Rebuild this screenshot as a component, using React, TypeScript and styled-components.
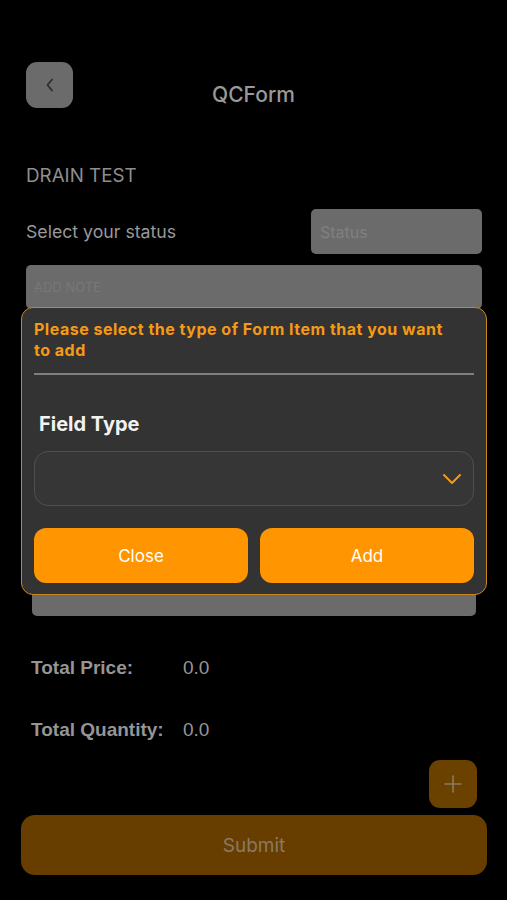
import React from 'react';
import styled, { createGlobalStyle } from 'styled-components';

const GlobalStyle = createGlobalStyle`
  html, body {
    margin: 0;
    padding: 0;
    background: #000;
  }
  body {
    font-family: Inter, 'Noto Sans', sans-serif;
  }
`;

const Screen = styled.div`
  position: relative;
  width: 507px;
  min-height: 900px;
  background: #000;
  overflow: hidden;
`;

const Header = styled.div`
  display: grid;
  grid-template-columns: 47px 1fr 47px;
  padding: 62px 26px 0;
`;

const BackButton = styled.div`
  width: 47px;
  height: 46px;
  border-radius: 11px;
  background: #6b6b6b;
  display: flex;
  align-items: center;
  justify-content: center;
`;

const Title = styled.div`
  padding-top: 22px;
  text-align: center;
  font-size: 21px;
  line-height: 22px;
  font-weight: 500;
  color: #999;
`;

const Content = styled.div`
  padding: 0 25px 0 26px;
`;

const SectionTitle = styled.div`
  margin-top: 58px;
  font-size: 18.8px;
  line-height: 20px;
  color: #8e8e8e;
`;

const StatusRow = styled.div`
  margin-top: 23px;
  display: flex;
  align-items: center;
  justify-content: space-between;
`;

const Label = styled.div`
  font-size: 17.7px;
  color: #999;
`;

const Field = styled.div<{ $width?: number; $height: number; $small?: boolean }>`
  width: ${(p) => (p.$width ? `${p.$width}px` : '100%')};
  height: ${(p) => p.$height}px;
  box-sizing: border-box;
  border-radius: 5px;
  background: #6b6b6b;
  display: flex;
  align-items: center;
  padding-left: ${(p) => (p.$small ? 8 : 9)}px;
  font-size: ${(p) => (p.$small ? 13 : 16)}px;
  color: ${(p) => (p.$small ? '#787878' : '#808080')};
`;

const NoteField = styled(Field)`
  margin-top: 11px;
`;

const ItemCard = styled.div`
  margin: 11px 6px 0 6px;
  height: 296px;
  border-radius: 5px;
  background: #6b6b6b;
`;

const Totals = styled.div`
  padding-left: 5px;
  margin-top: 42px;
  display: flex;
  flex-direction: column;
  gap: 42px;
`;

const TotalRow = styled.div`
  display: grid;
  grid-template-columns: 152px 1fr;
  font-family: 'Liberation Sans', Arial, sans-serif;
  font-size: 19px;
  line-height: 20px;
  color: #959595;
`;

const TotalLabel = styled.span`
  font-weight: 700;
`;

const PlusRow = styled.div`
  margin-top: 20px;
  display: flex;
  justify-content: flex-end;
  padding-right: 5px;
`;

const PlusButton = styled.div`
  width: 48px;
  height: 48px;
  border-radius: 11px;
  background: #6b4100;
  display: flex;
  align-items: center;
  justify-content: center;
`;

const SubmitButton = styled.div`
  margin: 7px -5px 0;
  height: 60px;
  border-radius: 14px;
  background: #673e00;
  display: flex;
  align-items: center;
  justify-content: center;
  font-size: 19px;
  color: #8a7a62;
`;

const Modal = styled.div`
  position: absolute;
  left: 21px;
  top: 307px;
  width: 466px;
  box-sizing: border-box;
  padding: 11px 12px 11px;
  border: 1px solid #c8861c;
  border-radius: 12px;
  background: #333333;
`;

const ModalHeading = styled.div`
  padding-right: 22px;
  font-size: 16px;
  line-height: 21px;
  font-weight: 700;
  letter-spacing: 0.5px;
  color: #f59a16;
`;

const Divider = styled.div`
  margin-top: 12px;
  height: 2px;
  background: #7e7e7e;
`;

const FieldLabel = styled.div`
  margin-top: 37px;
  padding-left: 5px;
  font-size: 20px;
  line-height: 24px;
  font-weight: 700;
  color: #f2f2f2;
`;

const Select = styled.div`
  margin-top: 15px;
  height: 55px;
  box-sizing: border-box;
  border: 1px solid #4f4f4f;
  border-radius: 14px;
  background: #363636;
  display: flex;
  align-items: center;
  justify-content: flex-end;
  padding-right: 11px;
`;

const ButtonRow = styled.div`
  margin-top: 22px;
  display: grid;
  grid-template-columns: 1fr 1fr;
  gap: 12px;
`;

const ModalButton = styled.div`
  height: 55px;
  border-radius: 12px;
  background: #ff9500;
  display: flex;
  align-items: center;
  justify-content: center;
  font-size: 17px;
  color: #fff;
`;

export default function App() {
  return (
    <Screen>
      <GlobalStyle />
      <Header>
        <BackButton>
          <svg width="10" height="14" viewBox="0 0 10 14">
            <polyline points="7,1.5 2.5,7 7,12.5" fill="none" stroke="#2e2e2e" strokeWidth="1.8" strokeLinecap="round" strokeLinejoin="round" />
          </svg>
        </BackButton>
        <Title>QCForm</Title>
        <div />
      </Header>
      <Content>
        <SectionTitle>DRAIN TEST</SectionTitle>
        <StatusRow>
          <Label>Select your status</Label>
          <Field $width={171} $height={45}>Status</Field>
        </StatusRow>
        <NoteField $height={44} $small>ADD NOTE</NoteField>
        <ItemCard />
        <Totals>
          <TotalRow>
            <TotalLabel>Total Price:</TotalLabel>
            <span>0.0</span>
          </TotalRow>
          <TotalRow>
            <TotalLabel>Total Quantity:</TotalLabel>
            <span>0.0</span>
          </TotalRow>
        </Totals>
        <PlusRow>
          <PlusButton>
            <svg width="20" height="20" viewBox="0 0 20 20">
              <path d="M10 2v16M2 10h16" stroke="#8a7a62" strokeWidth="1.6" strokeLinecap="round" />
            </svg>
          </PlusButton>
        </PlusRow>
        <SubmitButton>Submit</SubmitButton>
      </Content>
      <Modal>
        <ModalHeading>Please select the type of Form Item that you want to add</ModalHeading>
        <Divider />
        <FieldLabel>Field Type</FieldLabel>
        <Select>
          <svg width="20" height="12" viewBox="0 0 20 12">
            <polyline points="2,2 10,10 18,2" fill="none" stroke="#f59a16" strokeWidth="2" strokeLinecap="round" strokeLinejoin="round" />
          </svg>
        </Select>
        <ButtonRow>
          <ModalButton>Close</ModalButton>
          <ModalButton>Add</ModalButton>
        </ButtonRow>
      </Modal>
    </Screen>
  );
}
